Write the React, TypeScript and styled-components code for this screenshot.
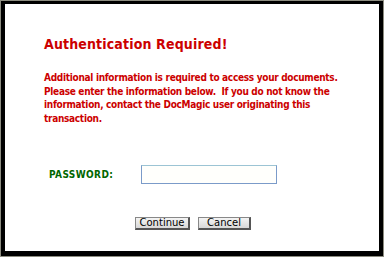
import React from "react";
import styled, { createGlobalStyle } from "styled-components";

const Global = createGlobalStyle`
  html, body { margin: 0; padding: 0; background: #ffffff; }
  body { width: 384px; height: 257px; overflow: hidden; }
`;

const Frame = styled.div`
  box-sizing: border-box;
  width: 384px;
  height: 257px;
  border: 1px solid #8c8c80;
  background: #000;
  padding: 3px 4px 5px 4px;
`;

const Panel = styled.div`
  box-sizing: border-box;
  height: 100%;
  background: #ffffff;
  padding: 31px 0 0 39px;
  font-family: "DejaVu Sans Condensed", "DejaVu Sans", Verdana, sans-serif;
  font-weight: bold;
`;

const Title = styled.h1`
  margin: 0;
  font-size: 14px;
  line-height: 18px;
  letter-spacing: 0.15px;
  color: #cc0000;
`;

const Message = styled.p`
  margin: 18px 0 0 0;
  white-space: nowrap;
  font-size: 10px;
  line-height: 13.5px;
  letter-spacing: -0.3px;
  color: #cc0000;
`;

const FieldRow = styled.div`
  display: flex;
  align-items: center;
  margin-top: 40px;
  padding-left: 5px;
`;

const Label = styled.label`
  width: 92px;
  font-size: 10px;
  letter-spacing: 0.4px;
  color: #006600;
`;

const Input = styled.input`
  box-sizing: border-box;
  width: 136px;
  height: 19px;
  border: 1px solid #7b9bc9;
  border-top-color: #9cc4d4;
  background: #fffffc;
  outline: none;
`;

const Buttons = styled.div`
  display: flex;
  gap: 8px;
  margin-top: 33px;
  padding-left: 91px;
`;

const Button = styled.button<{ $w: number }>`
  box-sizing: border-box;
  width: ${(p) => p.$w}px;
  height: 13px;
  padding: 0;
  border: 1px solid #888;
  border-right: 2px solid #555;
  border-bottom: 2px solid #555;
  background: linear-gradient(#f4f4f4, #d8d8d8);
  font-family: "DejaVu Sans", sans-serif;
  font-weight: normal;
  font-size: 10px;
  line-height: 10px;
  color: #000;
`;

export default function App() {
  return (
    <>
      <Global />
      <Frame>
        <Panel>
          <Title>Authentication Required!</Title>
          <Message>
            Additional information is required to access your documents.
            <br />
            Please enter the information below.&nbsp; If you do not know the
            <br />
            information, contact the DocMagic user originating this
            <br />
            transaction.
          </Message>
          <FieldRow>
            <Label>PASSWORD:</Label>
            <Input type="password" />
          </FieldRow>
          <Buttons>
            <Button $w={55}>Continue</Button>
            <Button $w={53}>Cancel</Button>
          </Buttons>
        </Panel>
      </Frame>
    </>
  );
}
